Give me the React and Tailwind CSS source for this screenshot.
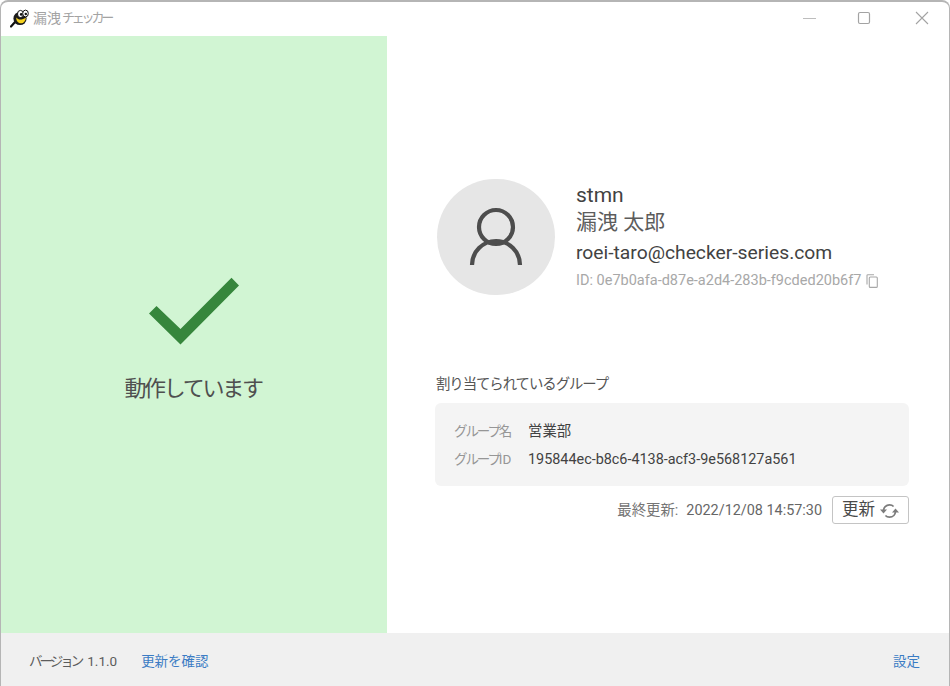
import React from "react";

const jp = "font-['Roboto','Noto_Sans_CJK_JP',sans-serif]";

function Logo() {
  return (
    <svg width="20" height="20" viewBox="0 0 20 20" className="shrink-0">
      <path d="M1 18.500 L5.500 13.500" stroke="#111" strokeWidth="2.200" strokeLinecap="round" />
      <ellipse cx="10" cy="10.500" rx="6.600" ry="6.600" fill="#1a1a1a" />
      <path d="M6.300 9.500C8 12 12 12.500 15.800 9.500C15.800 13 13.500 15.300 10.800 15.300C8 15.300 6 12.500 6.300 9.500Z" fill="#f6d21f" />
      <ellipse cx="10.500" cy="6" rx="3" ry="3.600" fill="#fff" stroke="#111" strokeWidth="1" />
      <ellipse cx="15.500" cy="5.500" rx="2.800" ry="3.400" fill="#fff" stroke="#111" strokeWidth="1" />
      <circle cx="11.200" cy="6.400" r="1.300" fill="#111" />
      <circle cx="15.800" cy="6" r="1.200" fill="#111" />
    </svg>
  );
}

function WindowControls() {
  return (
    <div className="flex items-center">
      <div className="flex h-8 w-[56px] items-center justify-center pl-[3px]">
        <svg width="14" height="14" viewBox="0 0 14 14"><path d="M1 7.500H14" stroke="#bdbdbd" strokeWidth="1.200" /></svg>
      </div>
      <div className="flex h-8 w-[58px] items-center justify-center">
        <svg width="14" height="14" viewBox="0 0 14 14"><rect x="1.500" y="1.500" width="11" height="11" rx="1.500" fill="none" stroke="#a3a3a3" strokeWidth="1.200" /></svg>
      </div>
      <div className="flex h-8 w-[56px] items-center justify-center pl-[2px]">
        <svg width="14" height="14" viewBox="0 0 14 14"><path d="M1 1L13 13M13 1L1 13" stroke="#a3a3a3" strokeWidth="1.100" /></svg>
      </div>
    </div>
  );
}

function UserIcon() {
  return (
    <svg width="58" height="62" viewBox="0 0 58 62" fill="none" stroke="#4d4d4d" strokeWidth="4.200">
      <circle cx="29" cy="21" r="17" />
      <path d="M5 59 A24 24 0 0 1 53 59" />
    </svg>
  );
}

function CopyIcon() {
  return (
    <svg width="12" height="14" viewBox="0 0 12 14" fill="none" stroke="#a8a8a8" strokeWidth="1.100">
      <path d="M1 10.500V1.500C1 1 1.300 .7 1.800 .7H8" />
      <rect x="3.300" y="3" width="8" height="10.400" rx="1" />
    </svg>
  );
}

function RefreshIcon() {
  return (
    <svg width="19" height="16" viewBox="0 0 19 16" fill="none" stroke="#7c7c7c" strokeWidth="1.700">
      <path d="M3.500 8C3.500 4.500 6 1.800 9.500 1.800C11.200 1.800 12.600 2.400 13.600 3.500" />
      <path d="M15.500 8C15.500 11.500 13 14.200 9.500 14.200C7.800 14.200 6.400 13.600 5.400 12.500" />
      <path d="M0 6.500H7L3.500 10.500Z" fill="#7c7c7c" stroke="none" />
      <path d="M12 9.500H19L15.500 5.500Z" fill="#7c7c7c" stroke="none" />
    </svg>
  );
}

export default function App() {
  return (
    <div className={`${jp} flex h-[686px] w-[950px] flex-col overflow-hidden rounded-t-lg border border-b-0 border-t-2 border-[#b5b5b5] bg-white`}>
      <header className="flex h-[34px] shrink-0 items-center justify-between pb-[2px]">
        <div className="flex items-center gap-[3px] pl-[9px]">
          <Logo />
          <span className="flex items-center text-[#a3a3a3]">
            <span className="text-[14px]">漏洩</span>
            <span className="ml-[1px] text-[13px] tracking-[-3.200px]">チェッカー</span>
          </span>
        </div>
        <WindowControls />
      </header>

      <main className="flex min-h-0 flex-1">
        <section className="flex w-[386px] shrink-0 flex-col items-center bg-[#d1f5d3] pt-[241px]">
          <svg width="92" height="70" viewBox="0 0 92 70">
            <path d="M1 36.500L8.500 29L32.500 52L83.500 .8L91 8.500L32.500 67.500Z" fill="#36863c" />
          </svg>
          <p className="mt-[25px] mr-[2px] text-[22px] leading-[33px] tracking-[-2.300px] text-[#4f4f4f]">動作しています</p>
        </section>

        <section className="flex min-w-0 flex-1 flex-col pt-[143px] pl-[48px] pr-[40px]">
          <div className="flex items-center gap-[21px] pl-[2px]">
            <div className="flex h-[116px] w-[118px] items-center justify-center rounded-full bg-[#e6e6e6]">
              <UserIcon />
            </div>
            <div className="flex flex-col">
              <p className="text-[21px] leading-[26px] text-[#424242]">stmn</p>
              <p className="text-[21px] leading-[28px] text-[#5c5c5c]">漏洩 太郎</p>
              <p className="mt-[2px] text-[19.280px] leading-[30px] text-[#424242]">roei-taro@checker-series.com</p>
              <div className="mt-[1px] flex items-center gap-[5px] text-[14.500px] leading-[24px] text-[#a8a8a8]">
                <span>ID: 0e7b0afa-d87e-a2d4-283b-f9cded20b6f7</span>
                <CopyIcon />
              </div>
            </div>
          </div>

          <h2 className="mt-[78px] ml-[1px] text-[14.400px] leading-[24px] tracking-[-1.050px] text-[#555]">割り当てられているグループ</h2>
          <div className="mt-[6px] flex h-[83px] flex-col justify-center gap-[7px] rounded-md bg-[#f4f4f4] px-[19px] pt-[1px] text-[14.400px]">
            <div className="flex leading-[21px]">
              <span className="w-[74px] text-[13.500px] text-[#969696]"><span className="tracking-[-2.100px]">グループ</span>名</span>
              <span className="text-[#424242]">営業部</span>
            </div>
            <div className="flex leading-[21px]">
              <span className="w-[74px] text-[13.500px] text-[#969696]"><span className="tracking-[-2.100px]">グループ</span>ID</span>
              <span className="text-[#424242]">195844ec-b8c6-4138-acf3-9e568127a561</span>
            </div>
          </div>

          <div className="mt-[10px] flex items-center justify-end gap-[10px]">
            <span className="pt-[2px] text-[14.400px] text-[#757575]">最終更新:<span className="ml-[8px] text-[#666]">2022/12/08 14:57:30</span></span>
            <button className="flex h-[28px] w-[77px] items-center justify-start gap-[5px] rounded-[3px] border border-[#c4c4c4] pt-[1px] pl-[9px] text-[16.500px] text-[#4a4a4a]">
              更新
              <RefreshIcon />
            </button>
          </div>
        </section>
      </main>

      <footer className="flex h-[53px] shrink-0 items-center justify-between bg-[#f0f0f0] pt-[4px] pr-[29px] pl-[28px] text-[13.500px]">
        <div className="flex items-center gap-[24px]">
          <span className="text-[#5c5c5c]"><span className="tracking-[-3px]">バージョン</span><span className="ml-[6px]">1.1.0</span></span>
          <a className="text-[#3b7cc4]">更新を確認</a>
        </div>
        <a className="text-[#3b7cc4]">設定</a>
      </footer>
    </div>
  );
}
